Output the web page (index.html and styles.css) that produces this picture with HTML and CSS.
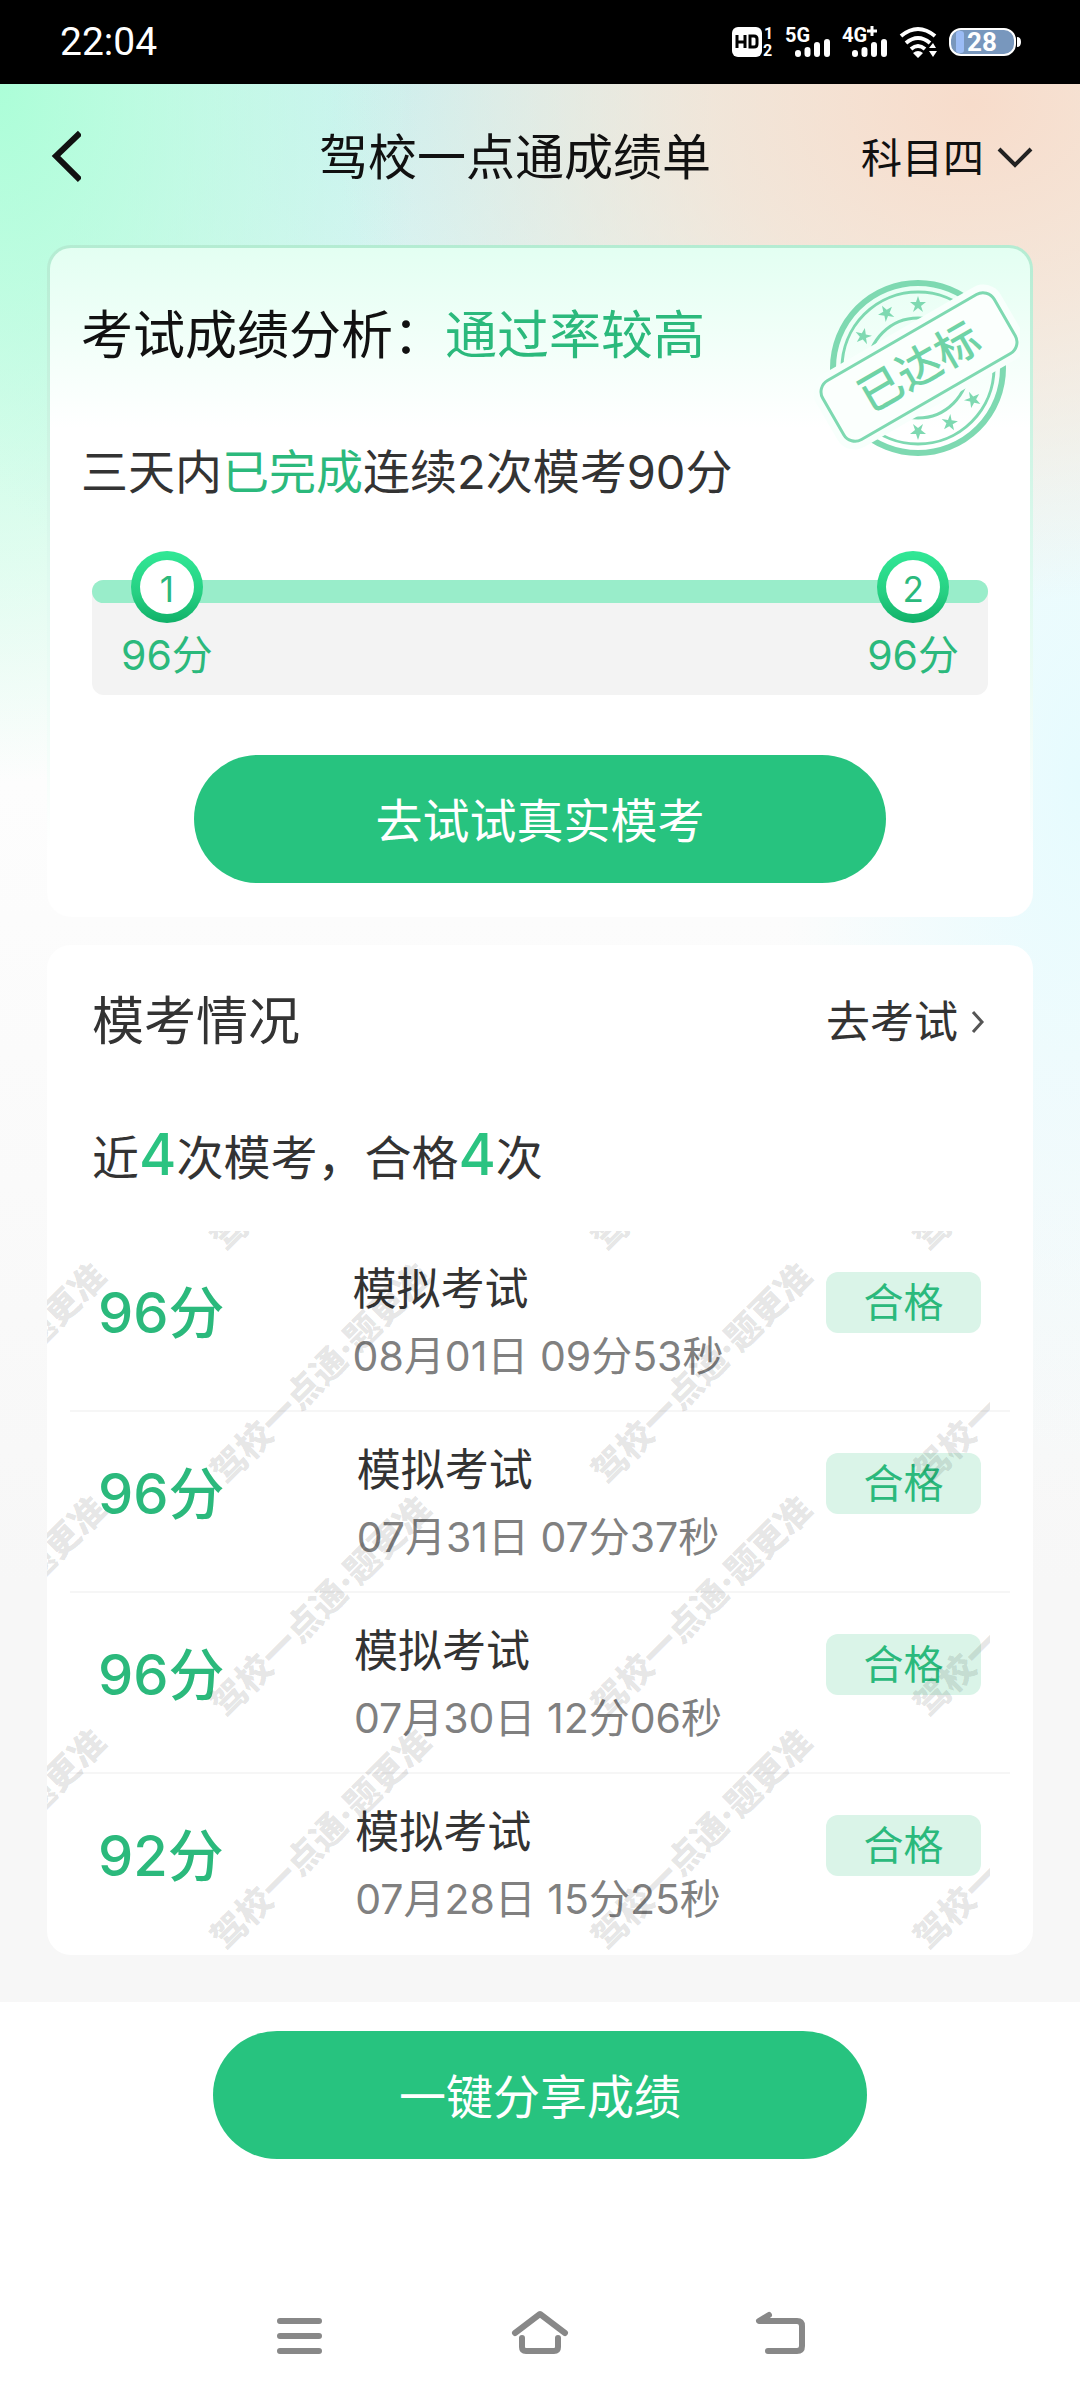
FILE: index.html
```html
<!DOCTYPE html>
<html lang="zh-CN">
<head>
    <meta charset="UTF-8">
    <meta name="viewport" content="width=device-width, initial-scale=1.0">
    <title>驾校一点通成绩单</title>
    <link rel="stylesheet" href="styles.css">
</head>
<body>
    <div class="status-bar">
        <span class="clock">22:04</span>
        <svg class="status-icons" width="292" height="34" viewBox="0 0 292 34">
            <!-- HD -->
            <rect x="1" y="2" width="30" height="30" rx="6" fill="#fff"/>
            <path d="M6 10v13M14 10v13M6 17h8M19 11h4q3 0 3 3v5q0 3-3 3h-4z" fill="none" stroke="#000" stroke-width="3"/>
            <text class="tiny" x="33" y="14">1</text>
            <text class="tiny" x="32" y="31">2</text>
            <!-- 5G -->
            <text class="net" x="54" y="17">5G</text>
            <path d="M67 28v1M76.500 25v4M86 20v9M96 17v12" class="bars"/>
            <!-- 4G+ -->
            <text class="net" x="111" y="17">4G</text>
            <path d="M136 6h10M141 1v10" stroke="#fff" stroke-width="3"/>
            <path d="M124 28v1M133.500 25v4M143 20v9M153 17v12" class="bars"/>
            <!-- wifi -->
            <path d="M170 11q17-14 34 0M175 18q12-10 24 0M180 24q7-6 14 0" fill="none" stroke="#fff" stroke-width="4"/>
            <path d="M182 28q5-4 10 0l-5 5zM198 23l4-5 3 5zM198 26h8l-4 6z" fill="#fff"/>
            <!-- battery -->
            <rect x="219" y="4" width="65" height="26" rx="11" fill="#7897bd" stroke="#fff" stroke-width="2"/>
            <path d="M286 12q4 0 4 5t-4 5z" fill="#fff"/>
            <rect x="225" y="6" width="8" height="22" rx="3" fill="#9bbcf5"/>
            <text class="percent" x="236" y="26">28</text>
        </svg>
    </div>

    <div class="page">
        <header class="header">
            <button class="back" aria-label="返回">
                <svg width="34" height="56" viewBox="0 0 34 56"><path d="M33 3L9 26l24 24" fill="none" stroke="#111" stroke-width="6"/></svg>
            </button>
            <h1>驾校一点通成绩单</h1>
            <button class="subject">科目四
                <svg width="36" height="24" viewBox="0 0 36 24"><path d="M2 3l16 16L34 3" fill="none" stroke="#222" stroke-width="4"/></svg>
            </button>
        </header>

        <section class="card analysis">
            <svg class="stamp" width="206" height="180" viewBox="0 0 206 180">
                <g fill="none" stroke="#7ed9b1">
                    <circle cx="104" cy="88" r="85" stroke-width="6"/>
                    <circle cx="104" cy="88" r="76" stroke-width="3"/>
                    <circle cx="104" cy="88" r="50" stroke-width="3"/>
                </g>
                <g fill="#7ed9b1">
                    <path id="star" d="M104 16l2 6h6l-5 4 2 6-5-4-5 4 2-6-5-4h6z"/>
                    <use href="#star" transform="rotate(-30 104 88)"/>
                    <use href="#star" transform="rotate(-60 104 88)"/>
                    <use href="#star" transform="rotate(180 104 88)"/>
                    <use href="#star" transform="rotate(150 104 88)"/>
                    <use href="#star" transform="rotate(120 104 88)"/>
                </g>
                <g transform="rotate(-30 105 87)">
                    <rect x="-2" y="45" width="214" height="84" rx="20" fill="#f8fffc"/>
                    <rect x="6" y="53" width="198" height="68" rx="13" fill="#fbfffd" stroke="#7ed9b1" stroke-width="3"/>
                    <text x="105" y="103" text-anchor="middle">已达标</text>
                </g>
            </svg>
            <h2>考试成绩分析：<span class="green">通过率较高</span></h2>
            <p class="goal">三天内<span class="green">已完成</span>连续2次模考90分</p>
            <div class="progress">
                <div class="track"></div>
                <div class="step"><span class="dot">1</span><span>96分</span></div>
                <div class="step"><span class="dot">2</span><span>96分</span></div>
            </div>
            <button class="btn btn-try">去试试真实模考</button>
        </section>

        <section class="card exams">
            <div class="exams-head">
                <h2>模考情况</h2>
                <a href="#">去考试<svg width="16" height="24" viewBox="0 0 16 24"><path d="M3 2l9 10-9 10" fill="none" stroke="#555" stroke-width="3"/></svg></a>
            </div>
            <p class="summary">近<b>4</b>次模考，合格<b>4</b>次</p>
            <div class="list">
                <div class="row">
                    <span class="score">96分</span>
                    <div class="info"><h3>模拟考试</h3><p>08月01日 09分53秒</p></div>
                    <span class="badge">合格</span>
                </div>
                <div class="row">
                    <span class="score">96分</span>
                    <div class="info"><h3>模拟考试</h3><p>07月31日 07分37秒</p></div>
                    <span class="badge">合格</span>
                </div>
                <div class="row">
                    <span class="score">96分</span>
                    <div class="info"><h3>模拟考试</h3><p>07月30日 12分06秒</p></div>
                    <span class="badge">合格</span>
                </div>
                <div class="row">
                    <span class="score">92分</span>
                    <div class="info"><h3>模拟考试</h3><p>07月28日 15分25秒</p></div>
                    <span class="badge">合格</span>
                </div>
                <svg class="watermark" width="943" height="725" aria-hidden="true">
                    <text transform="translate(179 22) rotate(-45)">驾校一点通·题更准</text>
                    <text transform="translate(560 22) rotate(-45)">驾校一点通·题更准</text>
                    <text transform="translate(882 22) rotate(-45)">驾校一点通·题更准</text>
                    <text transform="translate(-146 255) rotate(-45)">驾校一点通·题更准</text>
                    <text transform="translate(179 255) rotate(-45)">驾校一点通·题更准</text>
                    <text transform="translate(560 255) rotate(-45)">驾校一点通·题更准</text>
                    <text transform="translate(882 255) rotate(-45)">驾校一点通·题更准</text>
                    <text transform="translate(-146 488) rotate(-45)">驾校一点通·题更准</text>
                    <text transform="translate(179 488) rotate(-45)">驾校一点通·题更准</text>
                    <text transform="translate(560 488) rotate(-45)">驾校一点通·题更准</text>
                    <text transform="translate(882 488) rotate(-45)">驾校一点通·题更准</text>
                    <text transform="translate(-146 721) rotate(-45)">驾校一点通·题更准</text>
                    <text transform="translate(179 721) rotate(-45)">驾校一点通·题更准</text>
                    <text transform="translate(560 721) rotate(-45)">驾校一点通·题更准</text>
                    <text transform="translate(882 721) rotate(-45)">驾校一点通·题更准</text>
                </svg>
            </div>
        </section>
    </div>

    <footer class="share">
        <button class="btn btn-share">一键分享成绩</button>
    </footer>

    <nav class="nav-bar">
        <button aria-label="菜单"><svg width="60" height="60" viewBox="0 0 60 60"><path d="M10 12h39M10 27h39M10 42h39"/></svg></button>
        <button aria-label="主页"><svg width="60" height="60" viewBox="0 0 60 60"><path d="M5 24L30 5l25 19M12 29v9q0 4 4 4h28q4 0 4-4v-9"/></svg></button>
        <button aria-label="返回"><svg width="60" height="60" viewBox="0 0 60 60"><path d="M19 6l-10 6h38q5 0 5 5v20q0 5-5 5H18"/></svg></button>
    </nav>
</body>
</html>
```

FILE: styles.css
```css
* {
    box-sizing: border-box;
}
body {
    margin: 0;
    background: #fff;
    color: #333;
    font-family: Inter, "Noto Sans CJK SC", sans-serif;
}
h1, h2, h3, p {
    margin: 0;
    font-weight: 400;
}
button {
    padding: 0;
    border: none;
    background: none;
    color: inherit;
    font-family: inherit;
    cursor: pointer;
}
svg {
    display: block;
}
.green {
    color: #2bb97c;
}

/* status bar */
.status-bar {
    display: flex;
    align-items: center;
    justify-content: space-between;
    height: 84px;
    padding: 0 57px 0 60px;
    background: #000;
    color: #fff;
}
.clock {
    font: 39px Roboto, sans-serif;
}
.status-icons text {
    fill: #fff;
    font-family: Roboto, sans-serif;
    font-weight: 700;
}
.status-icons .tiny {
    font-size: 16px;
}
.status-icons .net {
    font-size: 20px;
}
.status-icons .percent {
    font-size: 26px;
}
.bars {
    stroke: #fff;
    stroke-width: 6;
    stroke-linecap: round;
}

.page {
    padding: 0 47px 47px;
    background:
        radial-gradient(ellipse 640px 500px at 90% 20px, #f7dccb 0%, rgba(246, 224, 208, 0.75) 40%, rgba(246, 224, 208, 0) 100%),
        radial-gradient(ellipse 420px 700px at 0 0, #acfed8 0%, rgba(172, 254, 216, 0) 100%),
        radial-gradient(ellipse 560px 600px at 38% 0, #cbf1f1 0%, rgba(203, 241, 241, 0) 100%),
        radial-gradient(ellipse 300px 720px at 100% 700px, #e6fbfe 0%, rgba(230, 251, 254, 0) 100%),
        linear-gradient(#f0faf6, #fdfdfd 700px, #f7f7f7 1500px);
}
.header {
    display: grid;
    grid-template-columns: 272px 1fr auto;
    align-items: center;
    height: 161px;
    padding-bottom: 14px;
    color: #111;
}
.header h1 {
    font-size: 49px;
    line-height: 64px;
}
.back {
    justify-self: start;
}
.subject {
    display: flex;
    align-items: center;
    gap: 13px;
    font-size: 41px;
    line-height: 56px;
}

.card {
    position: relative;
    border-radius: 24px;
    background: #fff;
}
.card h2 {
    font-size: 52px;
    line-height: 72px;
}

/* score analysis */
.analysis {
    padding: 52px 31px 31px;
    border: 3px solid transparent;
    background:
        linear-gradient(#e3fff2, #fff 180px) padding-box,
        linear-gradient(#b4ecd2, #e0faf0 50%, #fff 90%) border-box;
}
.analysis h2 {
    color: #111;
}
.stamp {
    position: absolute;
    top: 32px;
    right: 10px;
}
.stamp text {
    fill: #6fd3a6;
    font-size: 44px;
    font-weight: 500;
}
.goal {
    margin-top: 68px;
    font-size: 47px;
    line-height: 64px;
}
.progress {
    position: relative;
    display: flex;
    justify-content: space-between;
    height: 115px;
    margin: 76px 11px 60px;
    padding: 0 29px;
    border-radius: 12px;
    background: #f3f3f3;
}
.track {
    position: absolute;
    top: 0;
    left: 0;
    right: 0;
    height: 23px;
    border-radius: 12px;
    background: #99edca;
}
.step {
    position: relative;
    display: flex;
    flex-direction: column;
    align-items: center;
    margin-top: -29px;
    color: #2bb97c;
    font-size: 41px;
    line-height: 64px;
}
.dot {
    width: 72px;
    height: 72px;
    border: 9px solid transparent;
    border-radius: 50%;
    background:
        linear-gradient(#fff, #fff) padding-box,
        linear-gradient(#31e896, #26cf82 60%, #10b068) border-box;
    font-size: 35px;
    line-height: 58px;
    text-align: center;
}
.btn {
    display: block;
    height: 128px;
    margin: 0 auto;
    padding-bottom: 4px;
    border-radius: 64px;
    background: #27c37f;
    color: #fff;
    font-size: 47px;
}
.btn-try {
    width: 692px;
}

/* mock exams */
.exams {
    margin-top: 28px;
}
.exams-head {
    display: flex;
    align-items: center;
    justify-content: space-between;
    padding: 41px 47px 0 45px;
}
.exams-head a {
    display: flex;
    align-items: center;
    gap: 12px;
    color: #333;
    font-size: 44px;
    line-height: 72px;
    text-decoration: none;
}
.summary {
    margin: 64px 45px 0;
    font-size: 47px;
    line-height: 72px;
}
.summary b {
    color: #2bc381;
    font-size: 57px;
    font-weight: 500;
    line-height: 0;
}
.list {
    position: relative;
    margin-top: 37px;
    padding: 0 23px;
}
.row {
    display: grid;
    grid-template-columns: 248px 1fr 252px;
    height: 181px;
    border-bottom: 2px solid #f6f6f6;
}
.row:last-of-type {
    border-bottom: none;
}
.score {
    padding-left: 28px;
    color: #2bb97c;
    font-size: 56px;
    font-weight: 500;
    line-height: 164px;
}
.info {
    justify-self: center;
    padding-top: 26px;
}
.info h3 {
    font-size: 44px;
    line-height: 64px;
}
.info p {
    color: #808080;
    font-size: 41px;
    line-height: 70px;
    white-space: nowrap;
}
.badge {
    justify-self: end;
    width: 155px;
    height: 61px;
    margin: 41px 29px 0 0;
    border-radius: 12px;
    background: #daf4e8;
    color: #2bb97c;
    font-size: 40px;
    line-height: 61px;
    text-align: center;
}
.watermark {
    position: absolute;
    top: 0;
    left: 0;
    overflow: hidden;
    pointer-events: none;
}
.watermark text {
    fill: rgba(0, 0, 0, 0.11);
    font-size: 35px;
    font-weight: 900;
}

.share {
    padding: 29px 0 0;
}
.btn-share {
    width: 654px;
}

/* system navigation */
.nav-bar {
    display: flex;
    justify-content: center;
    gap: 180px;
    margin-top: 150px;
    padding-bottom: 30px;
}
.nav-bar path {
    fill: none;
    stroke: #888;
    stroke-width: 6;
    stroke-linecap: round;
    stroke-linejoin: round;
}
```
